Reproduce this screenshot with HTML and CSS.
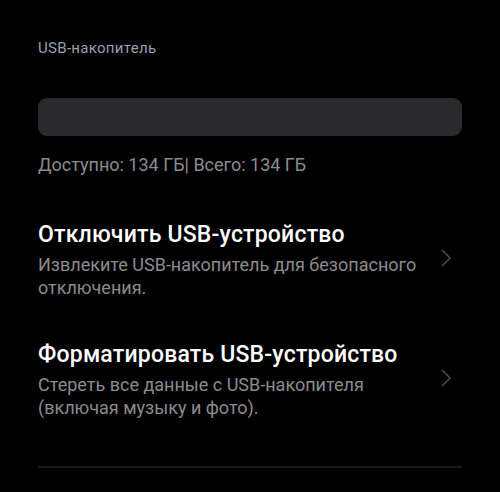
FILE: index.html
```html
<!DOCTYPE html>
<html lang="ru">
<head>
    <meta charset="UTF-8">
    <meta name="viewport" content="width=device-width, initial-scale=1.0">
    <title>USB-накопитель</title>
    <link rel="stylesheet" href="styles.css">
</head>
<body>
    <div class="page">
        <div class="caption">USB-накопитель</div>
        <div class="bar"></div>
        <div class="space">Доступно: 134 ГБ| Всего: 134 ГБ</div>

        <div class="item">
            <div class="item-text">
                <div class="item-title">Отключить USB-устройство</div>
                <div class="item-desc">Извлеките USB-накопитель для безопасного отключения.</div>
            </div>
            <svg class="arrow" width="10" height="18" viewBox="0 0 10 18"><path d="M1 1 L9 9 L1 17" fill="none" stroke="#4d4d4d" stroke-width="1.5"/></svg>
        </div>

        <div class="item">
            <div class="item-text">
                <div class="item-title">Форматировать USB-устройство</div>
                <div class="item-desc">Стереть все данные с USB-накопителя<br>(включая музыку и фото).</div>
            </div>
            <svg class="arrow" width="10" height="18" viewBox="0 0 10 18"><path d="M1 1 L9 9 L1 17" fill="none" stroke="#4d4d4d" stroke-width="1.5"/></svg>
        </div>

        <div class="divider"></div>
    </div>
</body>
</html>
```

FILE: styles.css
```css
html, body {
    margin: 0;
    background: #000;
}
.page {
    width: 500px;
    height: 492px;
    padding: 39px 38px 0;
    box-sizing: border-box;
    font-family: Roboto, "Noto Sans", sans-serif;
}
.caption {
    font-size: 15px;
    letter-spacing: 0.3px;
    line-height: 18px;
    color: #9a9fae;
}
.bar {
    margin-top: 41px;
    height: 38px;
    border-radius: 9px;
    background: #2a2a2c;
}
.space {
    margin-top: 18px;
    font-size: 18px;
    line-height: 22px;
    color: #8c8c8c;
}
.item {
    display: flex;
    align-items: flex-start;
    justify-content: space-between;
    margin-top: 45px;
}
.item + .item {
    margin-top: 42px;
}
.item-text {
    width: 390px;
}
.item-title {
    font-size: 23px;
    font-weight: 500;
    letter-spacing: 0.2px;
    line-height: 28px;
    color: #fff;
}
.item-desc {
    margin-top: 4px;
    font-size: 18px;
    line-height: 23px;
    color: #8c8c8c;
}
.arrow {
    margin-top: 28px;
    margin-right: 11px;
}
.divider {
    margin-top: 47px;
    height: 2px;
    background: #1a1a1a;
}
```
